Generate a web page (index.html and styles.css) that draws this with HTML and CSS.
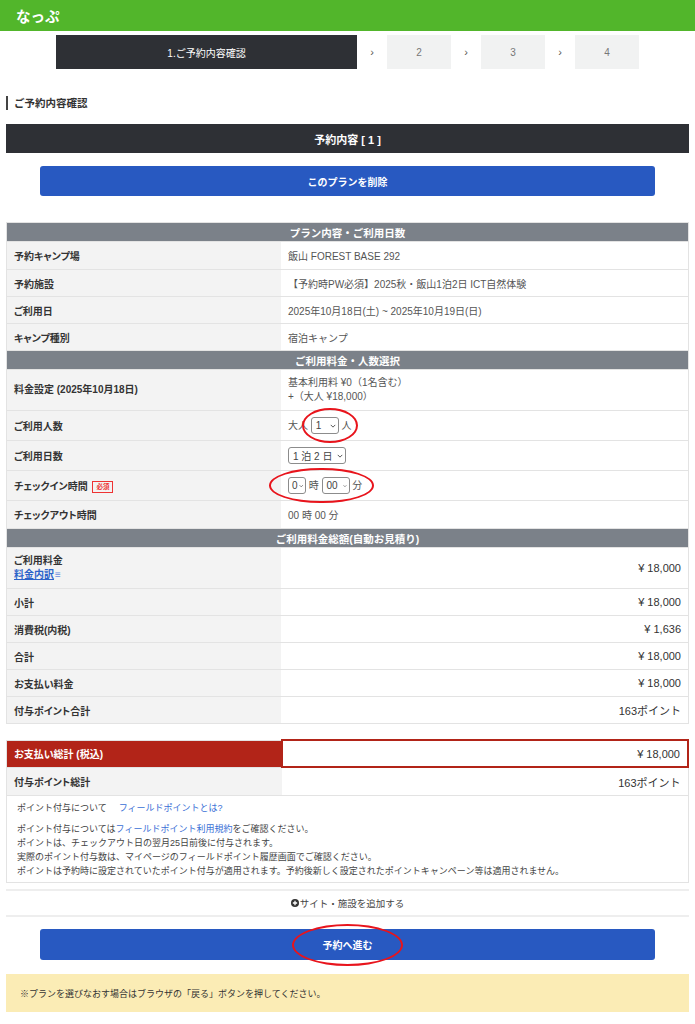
FILE: index.html
```html
<!DOCTYPE html>
<html lang="ja">
<head>
   <meta charset="utf-8">
   <title>ご予約内容確認 | なっぷ</title>
   <meta name="viewport" content="width=device-width, initial-scale=1">
   <link rel="stylesheet" href="styles.css">
</head>
<body>
   <header class="site-header">なっぷ</header>

   <main class="page">
      <ol class="steps">
         <li class="step current">1.ご予約内容確認</li>
         <li class="step-sep">&rsaquo;</li>
         <li class="step">2</li>
         <li class="step-sep">&rsaquo;</li>
         <li class="step">3</li>
         <li class="step-sep">&rsaquo;</li>
         <li class="step">4</li>
      </ol>

      <h2 class="section-title">ご予約内容確認</h2>

      <div class="reserve-bar">予約内容 [ 1 ]</div>
      <button class="btn-blue delete-btn">このプランを削除</button>

      <table class="detail">
         <tr><th colspan="2" class="group">プラン内容・ご利用日数</th></tr>
         <tr class="wide"><td class="label">予約キャンプ場</td><td class="value">飯山 FOREST BASE 292</td></tr>
         <tr><td class="label">予約施設</td><td class="value">【予約時PW必須】2025秋・飯山1泊2日 ICT自然体験</td></tr>
         <tr><td class="label">ご利用日</td><td class="value">2025年10月18日(土) ~ 2025年10月19日(日)</td></tr>
         <tr><td class="label">キャンプ種別</td><td class="value">宿泊キャンプ</td></tr>

         <tr><th colspan="2" class="group">ご利用料金・人数選択</th></tr>
         <tr class="tall"><td class="label">料金設定 (2025年10月18日)</td><td class="value">基本利用料 ¥0（1名含む）<br>+（大人 ¥18,000）</td></tr>
         <tr class="form-row">
            <td class="label">ご利用人数</td>
            <td class="value">大人 <span class="circled circled-people"><span class="select sel-people">1<svg viewBox="0 0 8 5"><path d="M1 1l3 3 3-3"/></svg></span></span> 人</td>
         </tr>
         <tr class="form-row">
            <td class="label">ご利用日数</td>
            <td class="value"><span class="select sel-days">1 泊 2 日<svg viewBox="0 0 8 5"><path d="M1 1l3 3 3-3"/></svg></span></td>
         </tr>
         <tr class="form-row">
            <td class="label">チェックイン時間 <span class="required">必須</span></td>
            <td class="value"><span class="circled circled-time"><span class="select sel-hour">0<svg viewBox="0 0 8 5"><path d="M1 1l3 3 3-3"/></svg></span> 時 <span class="select sel-min">00<svg viewBox="0 0 8 5"><path d="M1 1l3 3 3-3"/></svg></span> 分</span></td>
         </tr>
         <tr class="wide"><td class="label">チェックアウト時間</td><td class="value">00 時 00 分</td></tr>

         <tr><th colspan="2" class="group">ご利用料金総額(自動お見積り)</th></tr>
         <tr class="tall">
            <td class="label">ご利用料金<br><a href="#" class="link-under">料金内訳</a><span class="list-icon">&equiv;</span></td>
            <td class="value amount">¥ 18,000</td>
         </tr>
         <tr><td class="label">小計</td><td class="value amount">¥ 18,000</td></tr>
         <tr><td class="label">消費税(内税)</td><td class="value amount">¥ 1,636</td></tr>
         <tr><td class="label">合計</td><td class="value amount">¥ 18,000</td></tr>
         <tr><td class="label">お支払い料金</td><td class="value amount">¥ 18,000</td></tr>
         <tr><td class="label">付与ポイント合計</td><td class="value amount">163ポイント</td></tr>
      </table>

      <table class="detail total">
         <tr class="grand"><td class="label">お支払い総計 (税込)</td><td class="value amount">¥ 18,000</td></tr>
         <tr class="wide"><td class="label">付与ポイント総計</td><td class="value amount">163ポイント</td></tr>
         <tr>
            <td colspan="2" class="notes">
               <p class="notes-head">ポイント付与について<a href="#" class="link">フィールドポイントとは?</a></p>
               <p>ポイント付与については<a href="#" class="link">フィールドポイント利用規約</a>をご確認ください。<br>
               ポイントは、チェックアウト日の翌月25日前後に付与されます。<br>
               実際のポイント付与数は、マイページのフィールドポイント履歴画面でご確認ください。<br>
               ポイントは予約時に設定されていたポイント付与が適用されます。予約後新しく設定されたポイントキャンペーン等は適用されません。</p>
            </td>
         </tr>
      </table>

      <div class="add-site">
         <svg viewBox="0 0 10 10"><circle cx="5" cy="5" r="5"/><path d="M5 2.3v5.4M2.3 5h5.4"/></svg>サイト・施設を追加する
      </div>

      <button class="btn-blue next-btn"><span class="circled circled-next">予約へ進む</span></button>

      <div class="notice">※プランを選びなおす場合はブラウザの「戻る」ボタンを押してください。</div>
   </main>
</body>
</html>
```

FILE: styles.css
```css
body {
   margin: 0;
   background: #fff;
   color: #333;
   font-family: "Liberation Sans", "Noto Sans CJK JP", sans-serif;
   font-size: 10px;
}
.site-header {
   height: 31px;
   display: flex;
   align-items: center;
   padding-left: 16px;
   background: #52b62b;
   color: #fff;
   font-size: 14.5px;
   font-weight: bold;
}
.page {
   padding: 0 6px 12px;
}
.steps {
   list-style: none;
   margin: 4px 0 0;
   padding: 0;
   display: flex;
   justify-content: center;
}
.step {
   width: 64px;
   height: 34px;
   display: flex;
   align-items: center;
   justify-content: center;
   background: #f1f2f2;
   color: #777;
   font-size: 10px;
}
.step.current {
   width: 301px;
   background: #2e3035;
   color: #fff;
}
.step-sep {
   width: 30px;
   display: flex;
   align-items: center;
   justify-content: center;
   color: #555;
   font-size: 11px;
}
.section-title {
   margin: 27px 0 0;
   padding-left: 6px;
   border-left: 2px solid #444;
   font-size: 10.5px;
   line-height: 14px;
   font-weight: bold;
}
.reserve-bar {
   margin-top: 14px;
   height: 29px;
   display: flex;
   align-items: center;
   justify-content: center;
   background: #2e3035;
   color: #fff;
   font-size: 11px;
   font-weight: bold;
}
.btn-blue {
   display: block;
   width: calc(100% - 68px);
   height: 30px;
   margin: 13px auto 0;
   border: none;
   border-radius: 3px;
   background: #2859c1;
   color: #fff;
   font-family: inherit;
   font-size: 10px;
   font-weight: bold;
   cursor: pointer;
}
.detail {
   width: 100%;
   margin-top: 26px;
   border-collapse: collapse;
   border: 1px solid #e3e3e3;
}
.detail th.group {
   height: 18px;
   padding: 0;
   background: #7b8189;
   color: #fff;
   font-size: 10.5px;
   font-weight: bold;
   text-align: center;
}
.detail td {
   height: 26px;
   padding: 0 7px;
   border-top: 1px solid #e3e3e3;
   border-bottom: 1px solid #e3e3e3;
   vertical-align: middle;
}
.detail tr.wide td {
   height: 27px;
}
.detail .label {
   width: 260px;
   padding-left: 7px;
   background: #f3f3f3;
   color: #333;
   font-weight: bold;
   font-feature-settings: "palt";
}
.detail .value {
   background: #fff;
   color: #555;
}
.detail tr.tall td {
   height: 40px;
   line-height: 14px;
}
.detail tr.form-row td {
   height: 29px;
}
.detail .amount {
   text-align: right;
   color: #333;
   font-size: 11px;
}
.select {
   display: inline-flex;
   align-items: center;
   justify-content: space-between;
   gap: 5px;
   box-sizing: border-box;
   height: 17px;
   padding: 0 2px 0 4px;
   border: 1px solid #8c8c8c;
   border-radius: 3px;
   color: #444;
   white-space: nowrap;
   vertical-align: middle;
}
.sel-people {
   width: 28px;
}
.sel-hour {
   width: 18px;
   padding-left: 3px;
   gap: 1px;
}
.sel-min {
   width: 28px;
}
.select svg {
   width: 6px;
   height: 4px;
   fill: none;
   stroke: #555;
   stroke-width: 1.3;
}
.required {
   display: inline-block;
   margin-left: 2px;
   padding: 0 3px;
   border: 1px solid #e33;
   color: #e33;
   font-size: 6.5px;
   line-height: 10px;
   vertical-align: middle;
}
.circled {
   position: relative;
   display: inline-block;
}
.circled::after {
   content: "";
   position: absolute;
   border: 2.5px solid #e8141c;
   border-radius: 50%;
   pointer-events: none;
}
.circled-people::after {
   left: -9px;
   right: -19px;
   top: -9px;
   bottom: -9px;
}
.circled-time::after {
   left: -19px;
   right: -12px;
   top: -9px;
   bottom: -9px;
}
.circled-next::after {
   left: -31px;
   right: -30px;
   top: -13px;
   bottom: -14px;
}
.link-under {
   color: #2c63c9;
   text-decoration: underline;
}
.list-icon {
   color: #6b8fe0;
   margin-left: 1px;
}
.detail.total {
   margin-top: 15px;
}
.total tr.grand td {
   height: 25px;
}
.total tr.grand .label {
   background: #b22418;
   color: #fff;
}
.total tr.grand .value {
   border: 2px solid #b22418;
}
.notes {
   height: auto;
   padding: 5px 10px 4px !important;
   color: #444;
   font-size: 9px;
   line-height: 14px;
}
.notes p {
   margin: 0;
}
.notes-head {
   margin-bottom: 7px !important;
}
.notes-head .link {
   margin-left: 12px;
}
.link {
   color: #3a6fd6;
   text-decoration: none;
}
.add-site {
   margin-top: 6px;
   height: 24px;
   display: flex;
   align-items: center;
   justify-content: center;
   border-top: 2px solid #eee;
   border-bottom: 2px solid #eee;
   color: #444;
   font-size: 9.5px;
}
.add-site svg {
   width: 8px;
   height: 8px;
   margin-right: 1px;
}
.add-site circle {
   fill: #333;
}
.add-site path {
   stroke: #fff;
   stroke-width: 1.6;
}
.next-btn {
   margin-top: 12px;
   height: 31px;
}
.notice {
   margin-top: 14px;
   height: 38px;
   display: flex;
   align-items: center;
   padding: 0 14px;
   background: #fbecb5;
   color: #333;
   font-size: 9px;
}
```
